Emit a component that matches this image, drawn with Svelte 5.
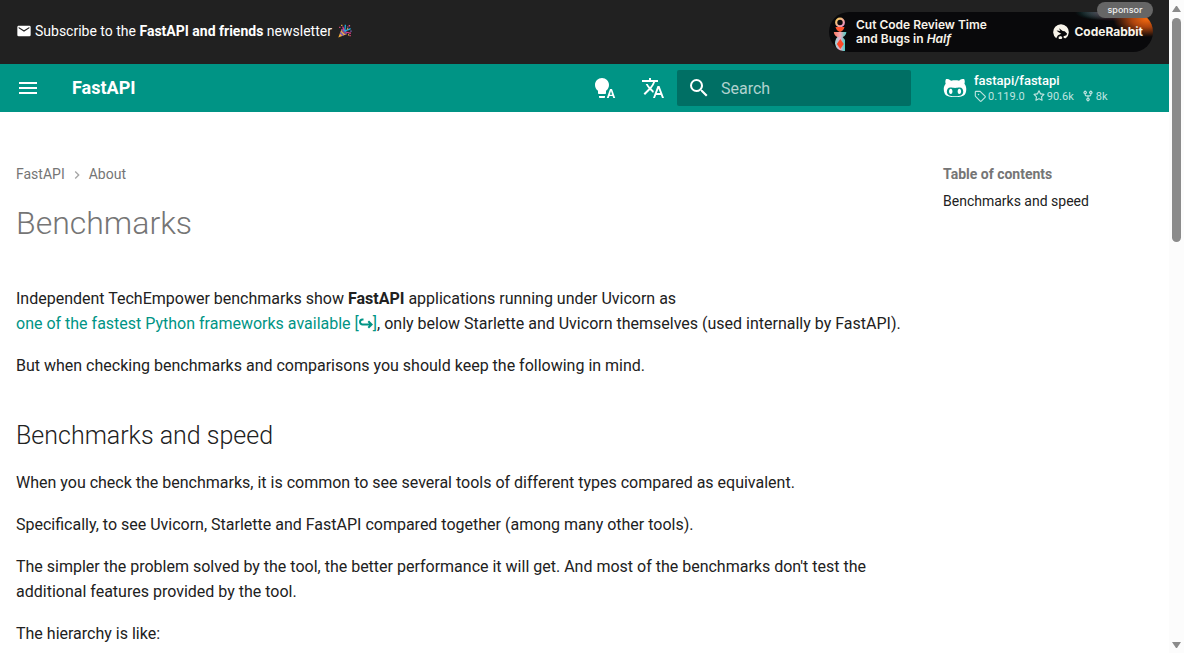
<script>
  const stats = [
    {
      label: '0.119.0',
      title: 'Version',
      path: 'M1 7.775V2.75C1 1.784 1.784 1 2.75 1h5.025c.464 0 .91.184 1.238.513l6.25 6.25a1.75 1.75 0 0 1 0 2.474l-5.026 5.026a1.75 1.75 0 0 1-2.474 0l-6.25-6.25A1.75 1.75 0 0 1 1 7.775m1.5 0c0 .066.026.13.073.177l6.25 6.25a.25.25 0 0 0 .354 0l5.025-5.025a.25.25 0 0 0 0-.354l-6.25-6.25a.25.25 0 0 0-.177-.073H2.75a.25.25 0 0 0-.25.25ZM6 5a1 1 0 1 1 0 2 1 1 0 0 1 0-2'
    },
    {
      label: '90.6k',
      title: 'Stars',
      path: 'M8 .25a.75.75 0 0 1 .673.418l1.882 3.815 4.21.612a.75.75 0 0 1 .416 1.279l-3.046 2.97.719 4.192a.751.751 0 0 1-1.088.791L8 12.347l-3.766 1.98a.75.75 0 0 1-1.088-.79l.72-4.194L.818 6.374a.75.75 0 0 1 .416-1.28l4.21-.611L7.327.668A.75.75 0 0 1 8 .25m0 2.445L6.615 5.5a.75.75 0 0 1-.564.41l-3.097.45 2.24 2.184a.75.75 0 0 1 .216.664l-.528 3.084 2.769-1.456a.75.75 0 0 1 .698 0l2.77 1.456-.53-3.084a.75.75 0 0 1 .216-.664l2.24-2.183-3.096-.45a.75.75 0 0 1-.564-.41z'
    },
    {
      label: '8k',
      title: 'Forks',
      path: 'M5 5.372v.878c0 .414.336.75.75.75h4.5a.75.75 0 0 0 .75-.75v-.878a2.25 2.25 0 1 1 1.5 0v.878a2.25 2.25 0 0 1-2.25 2.25h-1.5v2.128a2.251 2.251 0 1 1-1.5 0V8.5h-1.5A2.25 2.25 0 0 1 3.5 6.25v-.878a2.25 2.25 0 1 1 1.5 0M5 3.25a.75.75 0 1 0-1.5 0 .75.75 0 0 0 1.5 0m6.75.75a.75.75 0 1 0 0-1.5.75.75 0 0 0 0 1.5m-3 8.75a.75.75 0 1 0-1.5 0 .75.75 0 0 0 1.5 0'
    }
  ];
</script>

<div class="window">
  <div class="page">
    <aside class="announce">
      <a class="newsletter" href="#newsletter">
        <svg class="mail" viewBox="0 0 24 24" aria-hidden="true"><path d="m20 8-8 5-8-5V6l8 5 8-5m0-2H4c-1.11 0-2 .89-2 2v12a2 2 0 0 0 2 2h16a2 2 0 0 0 2-2V6a2 2 0 0 0-2-2" /></svg>
        <span>Subscribe to the <strong>FastAPI and friends</strong> newsletter</span>
        <svg class="party" viewBox="0 0 14 14" aria-hidden="true">
          <path d="M3.6 5 0.3 13.6 8.6 10.2Z" fill="#f4ae3d" />
          <path d="m2.6 7.6 3.3 3.7-1.6.6-2.5-2.5Z" fill="#7558b5" />
          <ellipse cx="6.2" cy="7.6" rx="1.5" ry="3.7" transform="rotate(-43 6.2 7.6)" fill="#7a4b91" />
          <path d="M6 7C8 5 6.7 3.3 7.5.7M7 7.5c2-2.7 3.2-.5 5.6-3" fill="none" stroke="#21a9de" stroke-width="1.3" />
          <path d="M5.5 6.4c.8-2-.4-2.8-1-3.8M8 8.4c2-.7 2.7 1 5 .8" fill="none" stroke="#e5398b" stroke-width="1.2" />
          <path d="M1.2 2.8h1.2v1.2H1.2zM10.7 1h1.4v1.4h-1.4zM11.5 11h1.2v1.2h-1.2z" fill="#ed4b82" />
          <path d="M3.2.7h1.2v1.2H3.2zM9 4.3h1.3v1.3H9zM10 10.2h1.2v1.2H10z" fill="#f6b84b" />
          <path d="M9.2 2.4h1.2v1.2H9.2zM12.4 6.5h1.2v1.2h-1.2z" fill="#8f72d3" />
        </svg>
      </a>
      <a class="sponsor" href="#coderabbit">
        <svg class="totem" viewBox="0 0 14 36" aria-hidden="true">
          <defs>
            <linearGradient id="bowl"><stop offset="0" stop-color="#ff775d" /><stop offset=".5" stop-color="#f1a9b7" /><stop offset="1" stop-color="#45cec4" /></linearGradient>
            <linearGradient id="body"><stop offset="0" stop-color="#8fd6d6" /><stop offset=".5" stop-color="#f1a9c7" /><stop offset="1" stop-color="#45cec4" /></linearGradient>
            <linearGradient id="ring" x2="1" y2="1"><stop stop-color="#f9ce60" /><stop offset="1" stop-color="#e98cc8" /></linearGradient>
          </defs>
          <circle cx="7" cy="6.5" r="3.8" fill="none" stroke="url(#ring)" stroke-width="2.2" />
          <path d="M2.5 11h9q-1 4-4.5 5q-3.5-1-4.5-5" fill="#ff542e" />
          <path d="M.8 16h12.6a6.3 5.5 0 0 1-12.600 0" fill="url(#bowl)" />
          <path d="M4.5 21h5.200L12 24v11H10A9 9 0 0 1 2 27.500c0-3 1-5 2.500-6.500" fill="url(#body)" />
          <path d="m7.300 23 3.500 5-3.500 5-3.500-5z" fill="#ff4726" />
        </svg>
        <span class="pitch">Cut Code Review Time<br />and Bugs in <em>Half</em></span>
        <span class="brand">
          <svg viewBox="0 0 16 16" aria-hidden="true">
            <path d="M3.2 14.200A7.800 7.800 0 1 1 12.800 14.200L10.800 14 10.500 12.300 13.500 11.200 14 9.400 11.700 7.200 9.700 6.900 6 4.200 7.300 6.900 3.600 6.500C5.200 8.700 7 8.800 8.300 9.700L5 11.200Z" />
            <path d="m5.600 12.800 2.500-.7 1.300 1.600-.8 1.300H5.800Z" />
          </svg>
          CodeRabbit
        </span>
        <span class="badge">sponsor</span>
      </a>
    </aside>

    <header>
      <button class="menu" aria-label="Open navigation">
        <svg viewBox="0 0 24 24"><path d="M3 6h18v2H3zm0 5h18v2H3zm0 5h18v2H3z" /></svg>
      </button>
      <a class="title" href="#home">FastAPI</a>
      <button class="tool" aria-label="Switch to light mode">
        <svg viewBox="0 0 24 24"><path d="M9 2c3.87 0 7 3.13 7 7 0 2.38-1.19 4.47-3 5.74V17c0 .55-.45 1-1 1H6c-.55 0-1-.45-1-1v-2.26C3.19 13.47 2 11.38 2 9c0-3.87 3.13-7 7-7M6 20h6v1c0 .55-.45 1-1 1H7c-.55 0-1-.45-1-1zm13-7h-2l-3.2 9h1.9l.7-2h3.2l.7 2h1.9zm-2.15 5.65L18 15l1.15 3.65z" /></svg>
      </button>
      <button class="tool" aria-label="Select language">
        <svg viewBox="0 0 24 24"><path d="m12.87 15.07-2.54-2.51.03-.03A17.5 17.5 0 0 0 14.07 6H17V4h-7V2H8v2H1v2h11.17C11.5 7.92 10.44 9.75 9 11.35 8.07 10.32 7.3 9.19 6.69 8h-2c.73 1.63 1.73 3.17 2.98 4.56l-5.09 5.02L4 19l5-5 3.11 3.11zM18.5 10h-2L12 22h2l1.12-3h4.75L21 22h2zm-2.62 7 1.62-4.33L19.12 17z" /></svg>
      </button>
      <label class="search">
        <svg viewBox="0 0 24 24" aria-hidden="true"><path d="M9.5 3A6.5 6.5 0 0 1 16 9.5c0 1.61-.59 3.09-1.56 4.23l.27.27h.79l5 5-1.5 1.5-5-5v-.79l-.27-.27A6.52 6.52 0 0 1 9.5 16 6.5 6.5 0 0 1 3 9.5 6.5 6.5 0 0 1 9.5 3m0 2C7 5 5 7 5 9.5S7 14 9.5 14 14 12 14 9.5 12 5 9.5 5" /></svg>
        <input type="text" placeholder="Search" aria-label="Search" />
      </label>
      <a class="source" href="#repository">
        <svg class="cat" viewBox="0 0 512 512" aria-hidden="true"><path d="M202.1 328.7c0 20.9-10.9 55.1-36.7 55.1s-36.7-34.2-36.7-55.1 10.9-55.1 36.7-55.1 36.7 34.2 36.7 55.1zM496 278.2c0 31.9-3.2 65.7-17.5 95-37.9 76.6-142.1 74.8-216.7 74.8-75.8 0-186.2 2.7-225.6-74.8-14.6-29-20.2-63.1-20.2-95 0-41.9 13.9-81.5 41.5-113.6-5.2-15.8-7.7-32.4-7.7-48.8 0-21.5 4.9-32.3 14.6-51.8 45.3 0 74.3 9 108.8 36 29-6.9 58.8-10 88.7-10 27 0 54.2 2.9 80.4 9.2 34-26.7 63-35.2 107.8-35.2 9.8 19.5 14.6 30.3 14.6 51.8 0 16.4-2.6 32.7-7.7 48.2 27.5 32.4 39 72.3 39 114.2zm-64.3 50.5c0-43.9-26.7-82.6-73.5-82.6-18.9 0-37 3.4-56 6-14.9 2.3-29.8 3.2-45.1 3.2-15.2 0-30.1-.9-45.1-3.2-18.7-2.6-37-6-56-6-46.8 0-73.5 38.7-73.5 82.6 0 87.8 80.4 101.3 150.4 101.3h48.2c70.3 0 150.6-13.4 150.6-101.3zm-82.6-55.1c-25.8 0-36.7 34.2-36.7 55.1s10.9 55.1 36.7 55.1 36.7-34.2 36.7-55.1-10.9-55.1-36.7-55.1z" /></svg>
        <span class="repo">
          <span class="name">fastapi/fastapi</span>
          <span class="facts">
            {#each stats as stat}
              <span class="fact"><svg viewBox="0 0 16 16" aria-label={stat.title}><path d={stat.path} /></svg>{stat.label}</span>
            {/each}
          </span>
        </span>
      </a>
    </header>

    <div class="columns">
      <main>
        <nav class="crumbs" aria-label="Breadcrumbs">
          <a href="#home">FastAPI</a>
          <svg viewBox="0 0 24 24" aria-hidden="true"><path d="M8.59 16.58 13.17 12 8.59 7.41 10 6l6 6-6 6z" /></svg>
          <a href="#about">About</a>
        </nav>
        <h1>Benchmarks</h1>
        <p>
          Independent TechEmpower benchmarks show <strong>FastAPI</strong> applications running under Uvicorn as <a class="external" href="#techempower">one of the fastest Python frameworks available [<svg viewBox="0 0 14 12" aria-hidden="true"><path d="M4.500 1.500H3.500a2.500 2.500 0 0 0 0 5h9M9.300 3.200l3.300 3.300-3.300 3.300" /></svg>]</a>, only below Starlette and Uvicorn themselves (used internally by FastAPI).
        </p>
        <p>But when checking benchmarks and comparisons you should keep the following in mind.</p>
        <h2>Benchmarks and speed</h2>
        <p>When you check the benchmarks, it is common to see several tools of different types compared as equivalent.</p>
        <p>Specifically, to see Uvicorn, Starlette and FastAPI compared together (among many other tools).</p>
        <p>The simpler the problem solved by the tool, the better performance it will get. And most of the benchmarks don't test the additional features provided by the tool.</p>
        <p>The hierarchy is like:</p>
      </main>
      <nav class="toc" aria-label="Table of contents">
        <strong>Table of contents</strong>
        <a href="#speed">Benchmarks and speed</a>
      </nav>
    </div>
  </div>

  <div class="scrollbar" aria-hidden="true">
    <svg viewBox="0 0 15 18"><path d="M3 12 7 6h1l4 6z" /></svg>
    <div class="thumb"></div>
    <div class="rest"></div>
    <svg viewBox="0 0 15 18"><path d="M3 7h9l-4 6H7z" /></svg>
  </div>
</div>

<style>
  :global(body) { margin: 0; background: #fff; }
  .window {
    display: flex;
    height: 100vh;
    overflow: hidden;
    font-family: Roboto, sans-serif;
    font-size: 16px;
    line-height: 25px;
    color: #212121;
  }
  .page { flex: 1; min-width: 0; overflow: hidden; }
  a { color: inherit; text-decoration: none; }
  svg { fill: currentColor; flex: none; }
  button { border: 0; padding: 0; background: none; color: inherit; display: flex; cursor: pointer; }

  .announce {
    display: flex;
    align-items: center;
    justify-content: space-between;
    height: 64px;
    padding: 0 16px;
    box-sizing: border-box;
    background: #212121;
    color: #fff;
  }
  .newsletter { display: flex; align-items: center; font-size: 14px; line-height: 20px; padding-bottom: 2px; }
  .mail { width: 16px; height: 16px; margin-right: 3px; }
  .party { width: 14px; height: 14px; margin-left: 6px; }
  .sponsor {
    position: relative;
    display: flex;
    align-items: center;
    width: 324px;
    height: 40px;
    border-radius: 20px;
    background:
      radial-gradient(ellipse 34px 18px at 318px 7px, #f46a10, #ac430d 45%, transparent),
      radial-gradient(ellipse 32px 9px at 283px 0, #71394e, transparent),
      radial-gradient(ellipse 24px 8px at 270px 0, #17605c, transparent),
      #09090b;
    color: #f8f4ea;
    font-family: Inter, sans-serif;
  }
  .totem { width: 14px; height: 36px; margin: 4px 9px 0 4px; }
  .pitch { flex: 1; font-size: 12px; line-height: 14px; font-weight: 600; }
  .brand { display: flex; align-items: center; gap: 5px; margin-right: 10px; font-size: 12px; line-height: 16px; font-weight: 700; }
  .brand svg { width: 16px; height: 16px; }
  .badge {
    position: absolute;
    top: -10px;
    right: 0;
    width: 56px;
    border-radius: 8px;
    background: #666;
    color: #eee;
    font-size: 9px;
    font-weight: 500;
    line-height: 16px;
    text-align: center;
  }

  header {
    display: flex;
    align-items: center;
    height: 48px;
    background: #009485;
    color: #fff;
  }
  .menu { margin-left: 16px; }
  .menu svg, .tool svg { width: 24px; height: 24px; }
  .title { flex: 1; margin-left: 32px; font-size: 18px; line-height: 24px; font-weight: 700; }
  .tool { margin-right: 24px; }
  .tool + .search { margin-left: -12px; }
  .search {
    display: flex;
    align-items: center;
    gap: 10px;
    width: 234px;
    height: 36px;
    padding: 0 10px;
    box-sizing: border-box;
    border-radius: 2px;
    background: #006f64;
  }
  .search svg { width: 24px; height: 24px; }
  .search input {
    flex: 1;
    min-width: 0;
    padding: 2px 0 0;
    border: 0;
    outline: 0;
    background: none;
    color: #fff;
    font: 16px/24px Roboto, sans-serif;
  }
  .search input::placeholder { color: #b0d2cf; opacity: 1; }
  .source { display: flex; align-items: center; gap: 7px; width: 226px; margin-left: 32px; }
  .cat { width: 24px; height: 24px; }
  .repo { display: flex; flex-direction: column; }
  .name { font-size: 13px; line-height: 16px; font-weight: 500; }
  .facts { display: flex; gap: 8px; font-size: 11px; line-height: 15px; color: #bfe4e0; }
  .fact { display: flex; align-items: center; gap: 2px; }
  .fact svg { width: 12px; height: 12px; }

  .columns { display: flex; padding-top: 50px; }
  main { flex: 1; min-width: 0; padding: 0 16px; }
  .crumbs { display: flex; align-items: center; gap: 4px; font-size: 14px; color: #757575; }
  .crumbs svg { width: 16px; height: 16px; color: #a6a6a6; }
  h1 { margin: 15px 0 42px; font-size: 32px; line-height: 42px; font-weight: 300; color: #757575; }
  h2 { margin: 40px 0 17px; font-size: 25px; line-height: 35px; font-weight: 300; }
  p { margin: 0 0 17px; }
  .external { color: #009485; white-space: nowrap; }
  .external svg { width: 14px; height: 12px; fill: none; stroke: currentColor; stroke-width: 2; vertical-align: -1px; }
  .toc { display: flex; flex-direction: column; width: 226px; padding-left: 16px; gap: 2px; font-size: 14px; }
  .toc strong { color: #757575; }

  .scrollbar { display: flex; flex-direction: column; width: 15px; background: #fcfcfc; }
  .scrollbar svg { width: 15px; height: 18px; fill: #8b8b8b; }
  .thumb { flex: 4; margin: 0 3px; border-radius: 5px; background: #8b8b8b; }
  .rest { flex: 7; }
</style>
